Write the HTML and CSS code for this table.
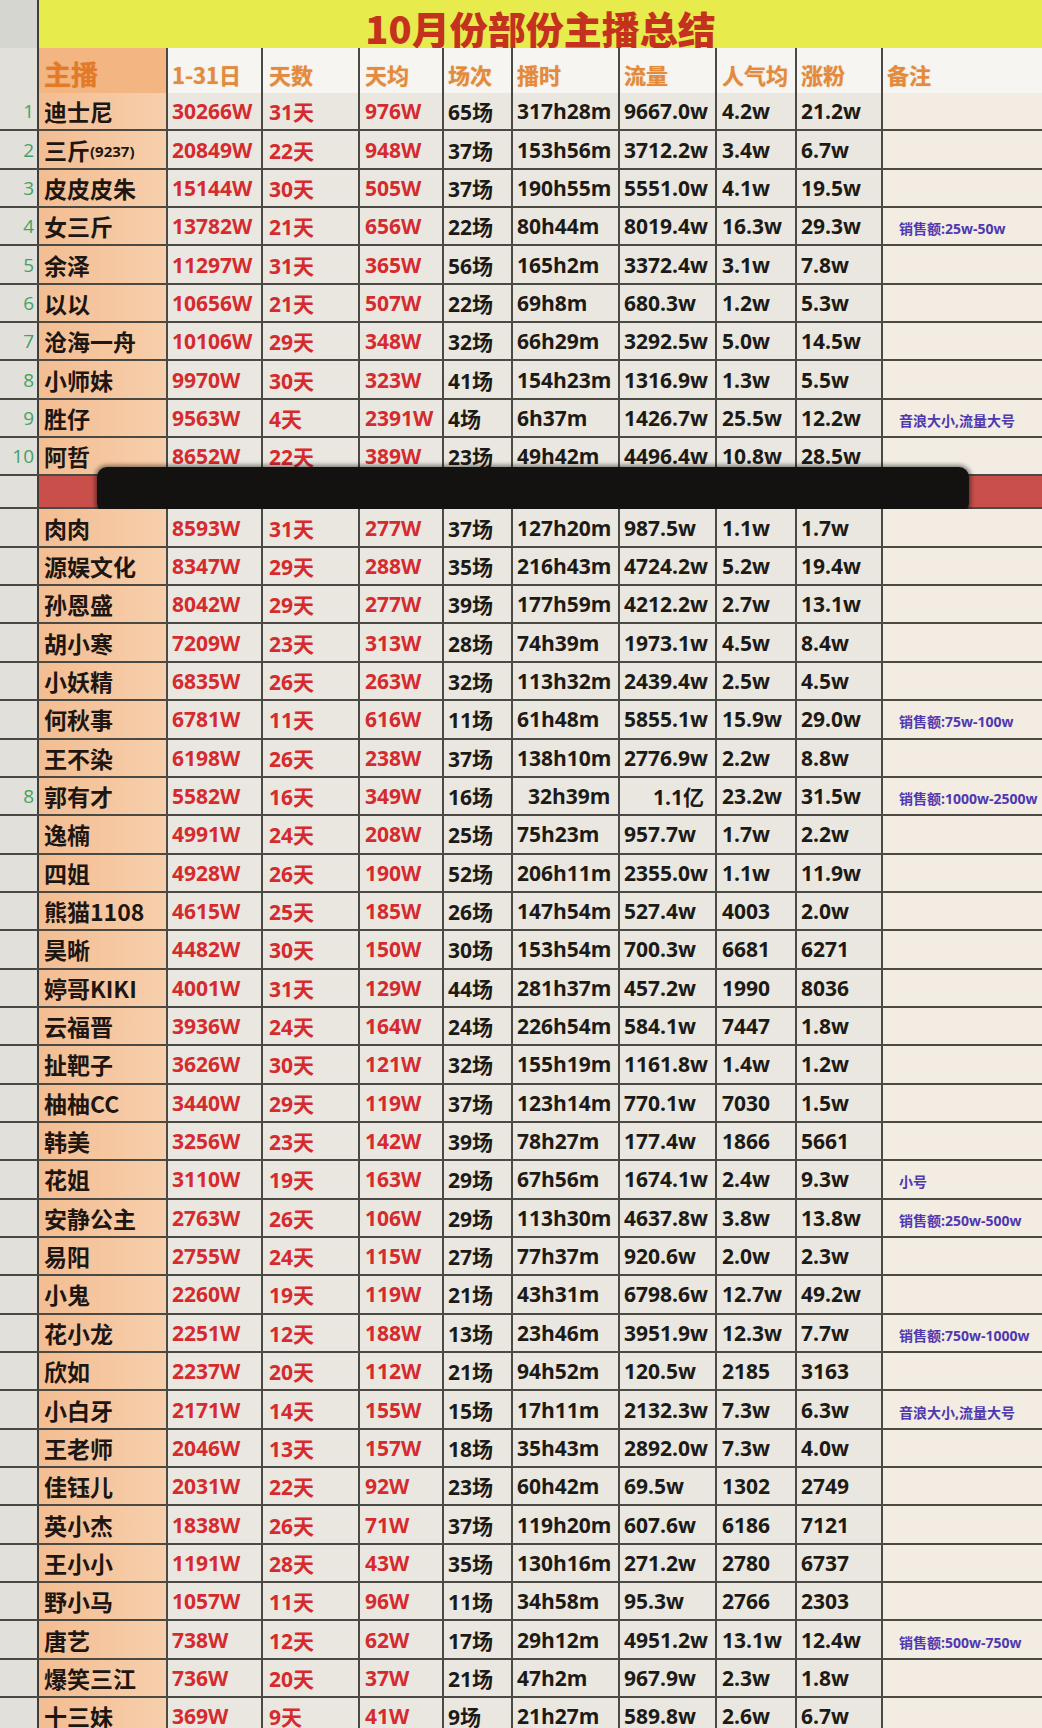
FILE: index.html
```html
<!DOCTYPE html>
<html lang="zh-CN">
<head>
<meta charset="utf-8">
<title>10月份部份主播总结</title>
<link rel="stylesheet" href="styles.css">
</head>
<body>
<div class="sheet">
  <div class="row title-row"><div class="g"></div><div class="title">10月份部份主播总结</div></div>
  <div class="row head"><div class="g"></div><div class="v hn">主播</div><div class="v">1-31日</div><div class="v">天数</div><div class="v">天均</div><div class="v">场次</div><div class="v">播时</div><div class="v">流量</div><div class="v">人气均</div><div class="v">涨粉</div><div class="v">备注</div></div>

  <div class="row"><div class="g">1</div><div class="v nm">迪士尼</div><div class="v r">30266W</div><div class="v r">31天</div><div class="v r">976W</div><div class="v">65场</div><div class="v">317h28m</div><div class="v">9667.0w</div><div class="v">4.2w</div><div class="v">21.2w</div><div class="v note"></div></div>
  <div class="row"><div class="g">2</div><div class="v nm">三斤<span class="sm">(9237)</span></div><div class="v r">20849W</div><div class="v r">22天</div><div class="v r">948W</div><div class="v">37场</div><div class="v">153h56m</div><div class="v">3712.2w</div><div class="v">3.4w</div><div class="v">6.7w</div><div class="v note"></div></div>
  <div class="row"><div class="g">3</div><div class="v nm">皮皮皮朱</div><div class="v r">15144W</div><div class="v r">30天</div><div class="v r">505W</div><div class="v">37场</div><div class="v">190h55m</div><div class="v">5551.0w</div><div class="v">4.1w</div><div class="v">19.5w</div><div class="v note"></div></div>
  <div class="row"><div class="g">4</div><div class="v nm">女三斤</div><div class="v r">13782W</div><div class="v r">21天</div><div class="v r">656W</div><div class="v">22场</div><div class="v">80h44m</div><div class="v">8019.4w</div><div class="v">16.3w</div><div class="v">29.3w</div><div class="v note">销售额:25w-50w</div></div>
  <div class="row"><div class="g">5</div><div class="v nm">余泽</div><div class="v r">11297W</div><div class="v r">31天</div><div class="v r">365W</div><div class="v">56场</div><div class="v">165h2m</div><div class="v">3372.4w</div><div class="v">3.1w</div><div class="v">7.8w</div><div class="v note"></div></div>
  <div class="row"><div class="g">6</div><div class="v nm">以以</div><div class="v r">10656W</div><div class="v r">21天</div><div class="v r">507W</div><div class="v">22场</div><div class="v">69h8m</div><div class="v">680.3w</div><div class="v">1.2w</div><div class="v">5.3w</div><div class="v note"></div></div>
  <div class="row"><div class="g">7</div><div class="v nm">沧海一舟</div><div class="v r">10106W</div><div class="v r">29天</div><div class="v r">348W</div><div class="v">32场</div><div class="v">66h29m</div><div class="v">3292.5w</div><div class="v">5.0w</div><div class="v">14.5w</div><div class="v note"></div></div>
  <div class="row"><div class="g">8</div><div class="v nm">小师妹</div><div class="v r">9970W</div><div class="v r">30天</div><div class="v r">323W</div><div class="v">41场</div><div class="v">154h23m</div><div class="v">1316.9w</div><div class="v">1.3w</div><div class="v">5.5w</div><div class="v note"></div></div>
  <div class="row"><div class="g">9</div><div class="v nm">胜仔</div><div class="v r">9563W</div><div class="v r">4天</div><div class="v r">2391W</div><div class="v">4场</div><div class="v">6h37m</div><div class="v">1426.7w</div><div class="v">25.5w</div><div class="v">12.2w</div><div class="v note">音浪大小,流量大号</div></div>
  <div class="row"><div class="g">10</div><div class="v nm">阿哲</div><div class="v r">8652W</div><div class="v r">22天</div><div class="v r">389W</div><div class="v">23场</div><div class="v">49h42m</div><div class="v">4496.4w</div><div class="v">10.8w</div><div class="v">28.5w</div><div class="v note"></div></div>

  <div class="row cut"><div class="g"></div><div class="redfill"></div><div class="bar"></div></div>

  <div class="row"><div class="g"></div><div class="v nm">肉肉</div><div class="v r">8593W</div><div class="v r">31天</div><div class="v r">277W</div><div class="v">37场</div><div class="v">127h20m</div><div class="v">987.5w</div><div class="v">1.1w</div><div class="v">1.7w</div><div class="v note"></div></div>
  <div class="row"><div class="g"></div><div class="v nm">源娱文化</div><div class="v r">8347W</div><div class="v r">29天</div><div class="v r">288W</div><div class="v">35场</div><div class="v">216h43m</div><div class="v">4724.2w</div><div class="v">5.2w</div><div class="v">19.4w</div><div class="v note"></div></div>
  <div class="row"><div class="g"></div><div class="v nm">孙恩盛</div><div class="v r">8042W</div><div class="v r">29天</div><div class="v r">277W</div><div class="v">39场</div><div class="v">177h59m</div><div class="v">4212.2w</div><div class="v">2.7w</div><div class="v">13.1w</div><div class="v note"></div></div>
  <div class="row"><div class="g"></div><div class="v nm">胡小寒</div><div class="v r">7209W</div><div class="v r">23天</div><div class="v r">313W</div><div class="v">28场</div><div class="v">74h39m</div><div class="v">1973.1w</div><div class="v">4.5w</div><div class="v">8.4w</div><div class="v note"></div></div>
  <div class="row"><div class="g"></div><div class="v nm">小妖精</div><div class="v r">6835W</div><div class="v r">26天</div><div class="v r">263W</div><div class="v">32场</div><div class="v">113h32m</div><div class="v">2439.4w</div><div class="v">2.5w</div><div class="v">4.5w</div><div class="v note"></div></div>
  <div class="row"><div class="g"></div><div class="v nm">何秋事</div><div class="v r">6781W</div><div class="v r">11天</div><div class="v r">616W</div><div class="v">11场</div><div class="v">61h48m</div><div class="v">5855.1w</div><div class="v">15.9w</div><div class="v">29.0w</div><div class="v note">销售额:75w-100w</div></div>
  <div class="row"><div class="g"></div><div class="v nm">王不染</div><div class="v r">6198W</div><div class="v r">26天</div><div class="v r">238W</div><div class="v">37场</div><div class="v">138h10m</div><div class="v">2776.9w</div><div class="v">2.2w</div><div class="v">8.8w</div><div class="v note"></div></div>
  <div class="row"><div class="g">8</div><div class="v nm">郭有才</div><div class="v r">5582W</div><div class="v r">16天</div><div class="v r">349W</div><div class="v">16场</div><div class="v in1">32h39m</div><div class="v in2">1.1亿</div><div class="v">23.2w</div><div class="v">31.5w</div><div class="v note">销售额:1000w-2500w</div></div>
  <div class="row"><div class="g"></div><div class="v nm">逸楠</div><div class="v r">4991W</div><div class="v r">24天</div><div class="v r">208W</div><div class="v">25场</div><div class="v">75h23m</div><div class="v">957.7w</div><div class="v">1.7w</div><div class="v">2.2w</div><div class="v note"></div></div>
  <div class="row"><div class="g"></div><div class="v nm">四姐</div><div class="v r">4928W</div><div class="v r">26天</div><div class="v r">190W</div><div class="v">52场</div><div class="v">206h11m</div><div class="v">2355.0w</div><div class="v">1.1w</div><div class="v">11.9w</div><div class="v note"></div></div>
  <div class="row"><div class="g"></div><div class="v nm">熊猫1108</div><div class="v r">4615W</div><div class="v r">25天</div><div class="v r">185W</div><div class="v">26场</div><div class="v">147h54m</div><div class="v">527.4w</div><div class="v">4003</div><div class="v">2.0w</div><div class="v note"></div></div>
  <div class="row"><div class="g"></div><div class="v nm">昊晰</div><div class="v r">4482W</div><div class="v r">30天</div><div class="v r">150W</div><div class="v">30场</div><div class="v">153h54m</div><div class="v">700.3w</div><div class="v">6681</div><div class="v">6271</div><div class="v note"></div></div>
  <div class="row"><div class="g"></div><div class="v nm">婷哥KIKI</div><div class="v r">4001W</div><div class="v r">31天</div><div class="v r">129W</div><div class="v">44场</div><div class="v">281h37m</div><div class="v">457.2w</div><div class="v">1990</div><div class="v">8036</div><div class="v note"></div></div>
  <div class="row"><div class="g"></div><div class="v nm">云福晋</div><div class="v r">3936W</div><div class="v r">24天</div><div class="v r">164W</div><div class="v">24场</div><div class="v">226h54m</div><div class="v">584.1w</div><div class="v">7447</div><div class="v">1.8w</div><div class="v note"></div></div>
  <div class="row"><div class="g"></div><div class="v nm">扯靶子</div><div class="v r">3626W</div><div class="v r">30天</div><div class="v r">121W</div><div class="v">32场</div><div class="v">155h19m</div><div class="v">1161.8w</div><div class="v">1.4w</div><div class="v">1.2w</div><div class="v note"></div></div>
  <div class="row"><div class="g"></div><div class="v nm">柚柚CC</div><div class="v r">3440W</div><div class="v r">29天</div><div class="v r">119W</div><div class="v">37场</div><div class="v">123h14m</div><div class="v">770.1w</div><div class="v">7030</div><div class="v">1.5w</div><div class="v note"></div></div>
  <div class="row"><div class="g"></div><div class="v nm">韩美</div><div class="v r">3256W</div><div class="v r">23天</div><div class="v r">142W</div><div class="v">39场</div><div class="v">78h27m</div><div class="v">177.4w</div><div class="v">1866</div><div class="v">5661</div><div class="v note"></div></div>
  <div class="row"><div class="g"></div><div class="v nm">花姐</div><div class="v r">3110W</div><div class="v r">19天</div><div class="v r">163W</div><div class="v">29场</div><div class="v">67h56m</div><div class="v">1674.1w</div><div class="v">2.4w</div><div class="v">9.3w</div><div class="v note">小号</div></div>
  <div class="row"><div class="g"></div><div class="v nm">安静公主</div><div class="v r">2763W</div><div class="v r">26天</div><div class="v r">106W</div><div class="v">29场</div><div class="v">113h30m</div><div class="v">4637.8w</div><div class="v">3.8w</div><div class="v">13.8w</div><div class="v note">销售额:250w-500w</div></div>
  <div class="row"><div class="g"></div><div class="v nm">易阳</div><div class="v r">2755W</div><div class="v r">24天</div><div class="v r">115W</div><div class="v">27场</div><div class="v">77h37m</div><div class="v">920.6w</div><div class="v">2.0w</div><div class="v">2.3w</div><div class="v note"></div></div>
  <div class="row"><div class="g"></div><div class="v nm">小鬼</div><div class="v r">2260W</div><div class="v r">19天</div><div class="v r">119W</div><div class="v">21场</div><div class="v">43h31m</div><div class="v">6798.6w</div><div class="v">12.7w</div><div class="v">49.2w</div><div class="v note"></div></div>
  <div class="row"><div class="g"></div><div class="v nm">花小龙</div><div class="v r">2251W</div><div class="v r">12天</div><div class="v r">188W</div><div class="v">13场</div><div class="v">23h46m</div><div class="v">3951.9w</div><div class="v">12.3w</div><div class="v">7.7w</div><div class="v note">销售额:750w-1000w</div></div>
  <div class="row"><div class="g"></div><div class="v nm">欣如</div><div class="v r">2237W</div><div class="v r">20天</div><div class="v r">112W</div><div class="v">21场</div><div class="v">94h52m</div><div class="v">120.5w</div><div class="v">2185</div><div class="v">3163</div><div class="v note"></div></div>
  <div class="row"><div class="g"></div><div class="v nm">小白牙</div><div class="v r">2171W</div><div class="v r">14天</div><div class="v r">155W</div><div class="v">15场</div><div class="v">17h11m</div><div class="v">2132.3w</div><div class="v">7.3w</div><div class="v">6.3w</div><div class="v note">音浪大小,流量大号</div></div>
  <div class="row"><div class="g"></div><div class="v nm">王老师</div><div class="v r">2046W</div><div class="v r">13天</div><div class="v r">157W</div><div class="v">18场</div><div class="v">35h43m</div><div class="v">2892.0w</div><div class="v">7.3w</div><div class="v">4.0w</div><div class="v note"></div></div>
  <div class="row"><div class="g"></div><div class="v nm">佳钰儿</div><div class="v r">2031W</div><div class="v r">22天</div><div class="v r">92W</div><div class="v">23场</div><div class="v">60h42m</div><div class="v">69.5w</div><div class="v">1302</div><div class="v">2749</div><div class="v note"></div></div>
  <div class="row"><div class="g"></div><div class="v nm">英小杰</div><div class="v r">1838W</div><div class="v r">26天</div><div class="v r">71W</div><div class="v">37场</div><div class="v">119h20m</div><div class="v">607.6w</div><div class="v">6186</div><div class="v">7121</div><div class="v note"></div></div>
  <div class="row"><div class="g"></div><div class="v nm">王小小</div><div class="v r">1191W</div><div class="v r">28天</div><div class="v r">43W</div><div class="v">35场</div><div class="v">130h16m</div><div class="v">271.2w</div><div class="v">2780</div><div class="v">6737</div><div class="v note"></div></div>
  <div class="row"><div class="g"></div><div class="v nm">野小马</div><div class="v r">1057W</div><div class="v r">11天</div><div class="v r">96W</div><div class="v">11场</div><div class="v">34h58m</div><div class="v">95.3w</div><div class="v">2766</div><div class="v">2303</div><div class="v note"></div></div>
  <div class="row"><div class="g"></div><div class="v nm">唐艺</div><div class="v r">738W</div><div class="v r">12天</div><div class="v r">62W</div><div class="v">17场</div><div class="v">29h12m</div><div class="v">4951.2w</div><div class="v">13.1w</div><div class="v">12.4w</div><div class="v note">销售额:500w-750w</div></div>
  <div class="row"><div class="g"></div><div class="v nm">爆笑三江</div><div class="v r">736W</div><div class="v r">20天</div><div class="v r">37W</div><div class="v">21场</div><div class="v">47h2m</div><div class="v">967.9w</div><div class="v">2.3w</div><div class="v">1.8w</div><div class="v note"></div></div>
  <div class="row"><div class="g"></div><div class="v nm">十三妹</div><div class="v r">369W</div><div class="v r">9天</div><div class="v r">41W</div><div class="v">9场</div><div class="v">21h27m</div><div class="v">589.8w</div><div class="v">2.6w</div><div class="v">6.7w</div><div class="v note"></div></div>
</div>
</body>
</html>
```
FILE: styles.css
```css
* { box-sizing: border-box; }
html, body { margin: 0; padding: 0; }
body {
  width: 1042px;
  height: 1728px;
  overflow: hidden;
  background: #e8e6de;
  font-family: "Open Sans", "Noto Sans CJK SC", sans-serif;
}
.sheet { display: flex; flex-direction: column; }

.row {
  display: grid;
  grid-template-columns: 39px 129px 95px 97px 84px 69px 107px 97px 80px 86px 159px;
  height: 38.35px;
  flex: none;
  border-bottom: 2px solid #4a4944;
  position: relative;
}

.g {
  background: #e1e0da;
  border-right: 2px solid #3f3e3a;
  display: flex;
  align-items: center;
  justify-content: flex-end;
  padding-right: 3px;
  font-family: "Open Sans", sans-serif;
  font-size: 19px;
  font-weight: 500;
  color: #45a266;
}

.v {
  display: flex;
  align-items: center;
  padding-left: 4px;
  border-right: 2px solid #4a4944;
  background: #e9e7df;
  white-space: nowrap;
  font-size: 21px;
  font-weight: 700;
  color: #1d1a16;
}
.v:last-child { border-right: none; }
.row > .v:nth-child(4) { padding-left: 6px; }
.row > .v:nth-child(5),
.row > .v:nth-child(9) { padding-left: 5px; }

.nm {
  padding-left: 5px;
  background: linear-gradient(90deg, #f3bd92, #f7cfac);
  font-family: "Noto Sans CJK SC", "Open Sans", sans-serif;
  font-size: 23px;
  color: #1e1612;
}
.sm { font-family: "Open Sans", sans-serif; font-size: 15px; padding-top: 3px; }
.r { color: #d52a2e; }
.in1 { padding-left: 15px; }
.in2 { padding-left: 33px; font-family: "Open Sans", "Noto Sans CJK SC", sans-serif; }

.row > .note {
  background: #f2ece2;
  font-size: 14px;
  color: #5038b0;
  padding-top: 4px;
  padding-left: 16px;
}

/* title */
.title-row { height: 48px; grid-template-columns: 39px 1fr; }
.title-row .g { background: #d6d6d0; }
.title {
  background: #e7eb4c;
  display: flex;
  align-items: center;
  justify-content: center;
  font-family: "Noto Sans CJK SC", sans-serif;
  font-size: 38px;
  font-weight: 900;
  color: #c4321f;
  padding-bottom: 2px;
}

/* header */
.head { height: 45px; }
.head .v {
  background: #f6f5f1;
  font-family: "Noto Sans CJK SC", "Open Sans", sans-serif;
  font-size: 22px;
  color: #e58a3b;
  padding-top: 6px;
  text-shadow: 0 0 1px rgba(190, 90, 20, 0.5);
}
.head .hn {
  background: #f3b683;
  font-size: 27px;
  color: #e37a28;
  padding-left: 5px;
}

/* redacted row */
.cut { height: 33px; grid-template-columns: 39px 1fr; }
.redfill { background: #c94f4b; }
.bar {
  position: absolute;
  left: 97px;
  top: -9px;
  width: 872px;
  height: 46px;
  background: #131211;
  border-radius: 10px;
  box-shadow: 0 0 4px 2px rgba(0, 0, 0, 0.45);
}
```
